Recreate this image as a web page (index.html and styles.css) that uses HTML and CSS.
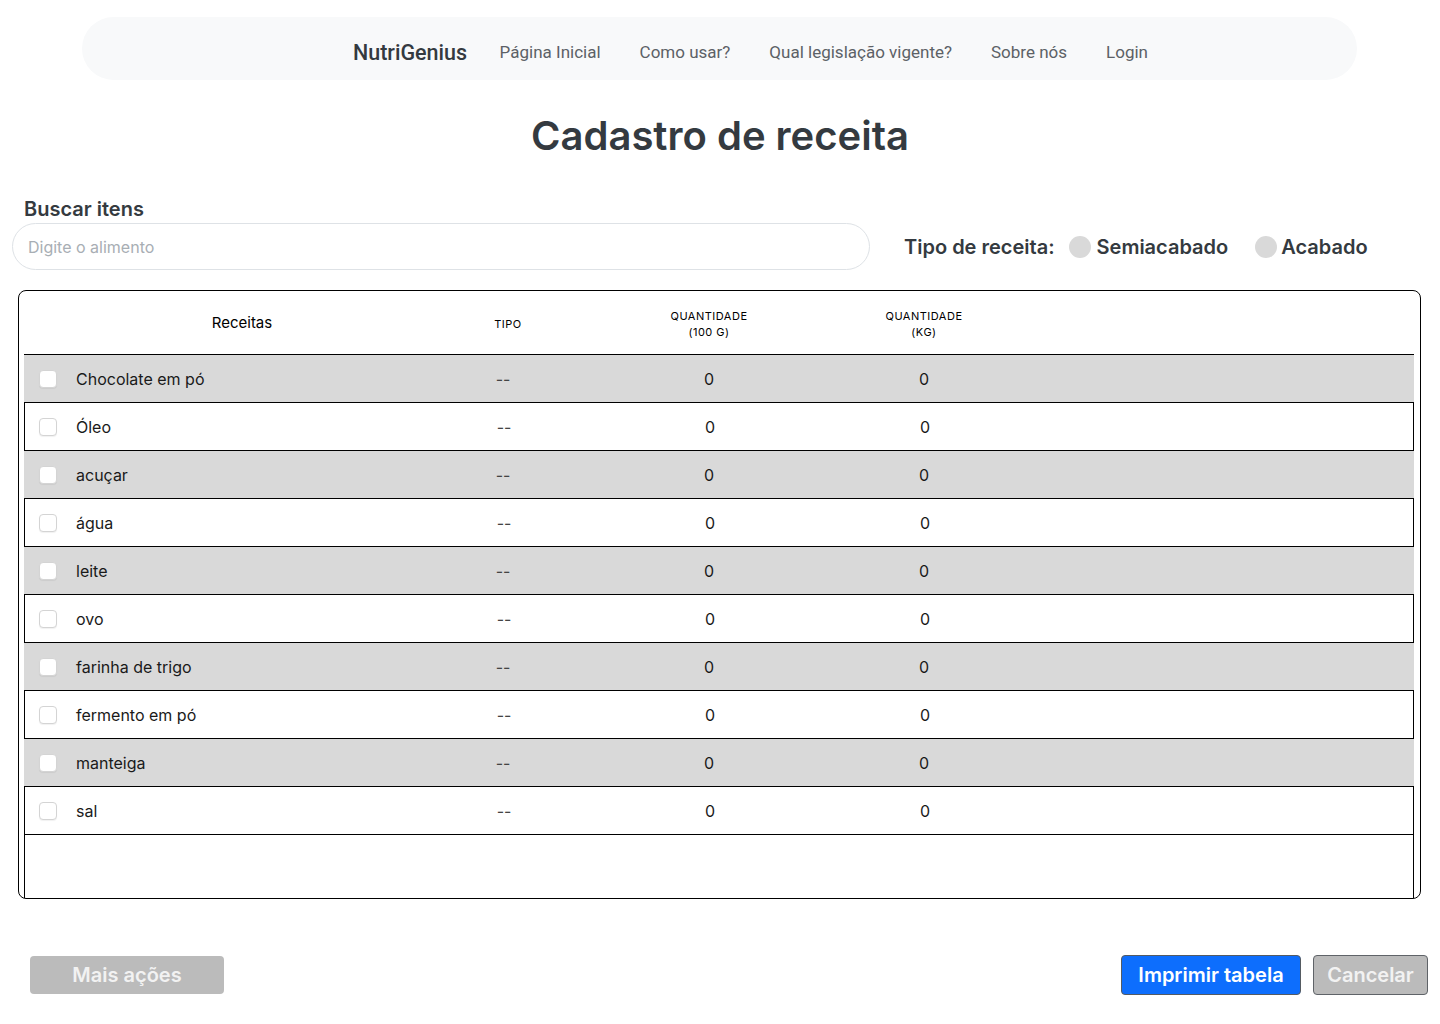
FILE: index.html
```html
<!DOCTYPE html>
<html lang="pt-BR">
<head>
<meta charset="utf-8">
<title>Cadastro de receita</title>
<link rel="stylesheet" href="styles.css">
</head>
<body>
<nav class="navbar">
  <span class="brand">NutriGenius</span>
  <a class="nav-link" href="#">Página Inicial</a>
  <a class="nav-link" href="#">Como usar?</a>
  <a class="nav-link" href="#">Qual legislação vigente?</a>
  <a class="nav-link" href="#">Sobre nós</a>
  <a class="nav-link" href="#">Login</a>
</nav>

<h1 class="title">Cadastro de receita</h1>

<section class="search-row">
  <div class="search">
    <label class="search-label" for="busca">Buscar itens</label>
    <input class="search-input" id="busca" type="text" placeholder="Digite o alimento">
  </div>
  <div class="tipo">
    <span class="tipo-label">Tipo de receita:</span>
    <label class="radio"><span class="radio-dot"></span>Semiacabado</label>
    <label class="radio"><span class="radio-dot"></span>Acabado</label>
  </div>
</section>

<section class="table-card">
  <div class="thead">
    <div class="th th-name">Receitas</div>
    <div class="th th-small">TIPO</div>
    <div class="th th-small">QUANTIDADE<br>(100 G)</div>
    <div class="th th-small">QUANTIDADE<br>(KG)</div>
    <div class="th"></div>
  </div>
  <div class="tbody">
    <div class="tr odd"><div class="td td-name"><span class="check"></span>Chocolate em pó</div><div class="td dash">--</div><div class="td">0</div><div class="td">0</div><div class="td"></div></div>
    <div class="tr even"><div class="td td-name"><span class="check"></span>Óleo</div><div class="td dash">--</div><div class="td">0</div><div class="td">0</div><div class="td"></div></div>
    <div class="tr odd"><div class="td td-name"><span class="check"></span>acuçar</div><div class="td dash">--</div><div class="td">0</div><div class="td">0</div><div class="td"></div></div>
    <div class="tr even"><div class="td td-name"><span class="check"></span>água</div><div class="td dash">--</div><div class="td">0</div><div class="td">0</div><div class="td"></div></div>
    <div class="tr odd"><div class="td td-name"><span class="check"></span>leite</div><div class="td dash">--</div><div class="td">0</div><div class="td">0</div><div class="td"></div></div>
    <div class="tr even"><div class="td td-name"><span class="check"></span>ovo</div><div class="td dash">--</div><div class="td">0</div><div class="td">0</div><div class="td"></div></div>
    <div class="tr odd"><div class="td td-name"><span class="check"></span>farinha de trigo</div><div class="td dash">--</div><div class="td">0</div><div class="td">0</div><div class="td"></div></div>
    <div class="tr even"><div class="td td-name"><span class="check"></span>fermento em pó</div><div class="td dash">--</div><div class="td">0</div><div class="td">0</div><div class="td"></div></div>
    <div class="tr odd"><div class="td td-name"><span class="check"></span>manteiga</div><div class="td dash">--</div><div class="td">0</div><div class="td">0</div><div class="td"></div></div>
    <div class="tr even"><div class="td td-name"><span class="check"></span>sal</div><div class="td dash">--</div><div class="td">0</div><div class="td">0</div><div class="td"></div></div>
    <div class="filler"></div>
  </div>
</section>

<footer class="actions">
  <button class="btn btn-gray btn-more" type="button">Mais ações</button>
  <div class="actions-right">
    <button class="btn btn-primary" type="button">Imprimir tabela</button>
    <button class="btn btn-gray btn-cancel" type="button">Cancelar</button>
  </div>
</footer>
</body>
</html>
```

FILE: styles.css
```css
* { box-sizing: border-box; }

html, body {
  margin: 0;
  padding: 0;
  background: #ffffff;
}

body {
  font-family: Inter, "Noto Sans", sans-serif;
  color: #212529;
  width: 1440px;
}

/* ---------- navbar ---------- */
.navbar {
  margin: 17px 83px 0 82px;
  height: 63px;
  background: #f8f9fa;
  border-radius: 32px;
  display: flex;
  align-items: center;
  padding: 7px 0 0 271px;
  font-family: Roboto, "Liberation Sans", sans-serif;
}

.brand {
  font-size: 21.5px;
  font-weight: 500;
  color: #343a40;
  margin-right: 13px;
}

.nav-link {
  font-size: 17px;
  color: #5c6166;
  text-decoration: none;
  padding: 0 19.5px;
}

.nav-link:last-child { padding-right: 0; }

/* ---------- title ---------- */
.title {
  margin: 32px 0 0;
  text-align: center;
  font-size: 40px;
  line-height: 48px;
  font-weight: 600;
  color: #343a40;
}

/* ---------- search row ---------- */
.search-row {
  display: flex;
  align-items: flex-end;
  margin-top: 37px;
  padding-left: 12px;
}

.search {
  width: 858px;
  display: flex;
  flex-direction: column;
}

.search-label {
  font-size: 20px;
  line-height: 24px;
  font-weight: 600;
  color: #343a40;
  padding-left: 12px;
  margin-bottom: 2px;
}

.search-input {
  height: 47px;
  border: 1px solid #dee2e6;
  border-radius: 24px;
  padding: 0 15px;
  font-family: Inter, "Noto Sans", sans-serif;
  font-size: 16px;
  color: #212529;
  outline: none;
}

.search-input::placeholder { color: #a8aeb4; }

.tipo {
  height: 47px;
  display: flex;
  align-items: center;
  margin-left: 34px;
  font-size: 20px;
  font-weight: 600;
  color: #343a40;
}

.tipo-label { margin-right: 14px; }

.radio {
  display: flex;
  align-items: center;
  margin-right: 27px;
}

.radio + .radio .radio-dot { margin-right: 4px; }

.radio-dot {
  width: 22px;
  height: 22px;
  border-radius: 50%;
  background: #d9d9d9;
  margin-right: 6px;
}

/* ---------- table ---------- */
.table-card {
  margin: 20px 19px 0 18px;
  border: 1px solid #000;
  border-radius: 8px;
  padding: 0 6px 0 5px;
}

.thead, .tr {
  display: grid;
  grid-template-columns: 436px 96px 306px 124px 1fr;
  align-items: center;
}

.thead {
  height: 64px;
  border-bottom: 1px solid #000;
  color: #000;
}

.th {
  text-align: center;
}

.th-name {
  font-size: 15px;
}

.th-small {
  font-size: 11px;
  line-height: 16px;
  letter-spacing: 0.5px;
  padding-top: 3px;
}

.tr {
  font-size: 16px;
  color: #1a1a1a;
}

.tr.odd {
  height: 47px;
  background: #d9d9d9;
}

.tr.even {
  height: 49px;
  background: #fff;
  border: 1px solid #000;
}

.td { text-align: center; }

.td-name {
  text-align: left;
  display: flex;
  align-items: center;
  padding-left: 14px;
}

.tr.even .td-name { padding-left: 14px; }
.tr.odd .td-name { padding-left: 15px; }

.dash {
  color: #444;
  padding-right: 10px;
}

.check {
  width: 18px;
  height: 18px;
  border-radius: 4px;
  background: #fff;
  border: 1px solid #d4d4d4;
  box-shadow: 0 1px 1px rgba(0,0,0,0.06);
  margin-right: 19px;
}

.filler {
  height: 63px;
  border-left: 1px solid #000;
  border-right: 1px solid #000;
}

/* ---------- footer actions ---------- */
.actions {
  display: flex;
  justify-content: space-between;
  align-items: center;
  margin-top: 56px;
  padding: 0 12px 0 30px;
}

.actions-right {
  display: flex;
  gap: 12px;
}

.btn {
  font-family: Inter, "Noto Sans", sans-serif;
  font-size: 20px;
  font-weight: 600;
  border-radius: 4px;
  cursor: pointer;
}

.btn-gray {
  background: #bbbbbb;
  color: #f2f2f2;
}

.btn-more {
  width: 194px;
  height: 38px;
  border: none;
}

.btn-primary {
  width: 180px;
  height: 40px;
  background: #0d6efd;
  color: #fff;
  border: 1px solid #555b62;
}

.btn-cancel {
  width: 115px;
  height: 40px;
  border: 1px solid #5f6368;
}
```
